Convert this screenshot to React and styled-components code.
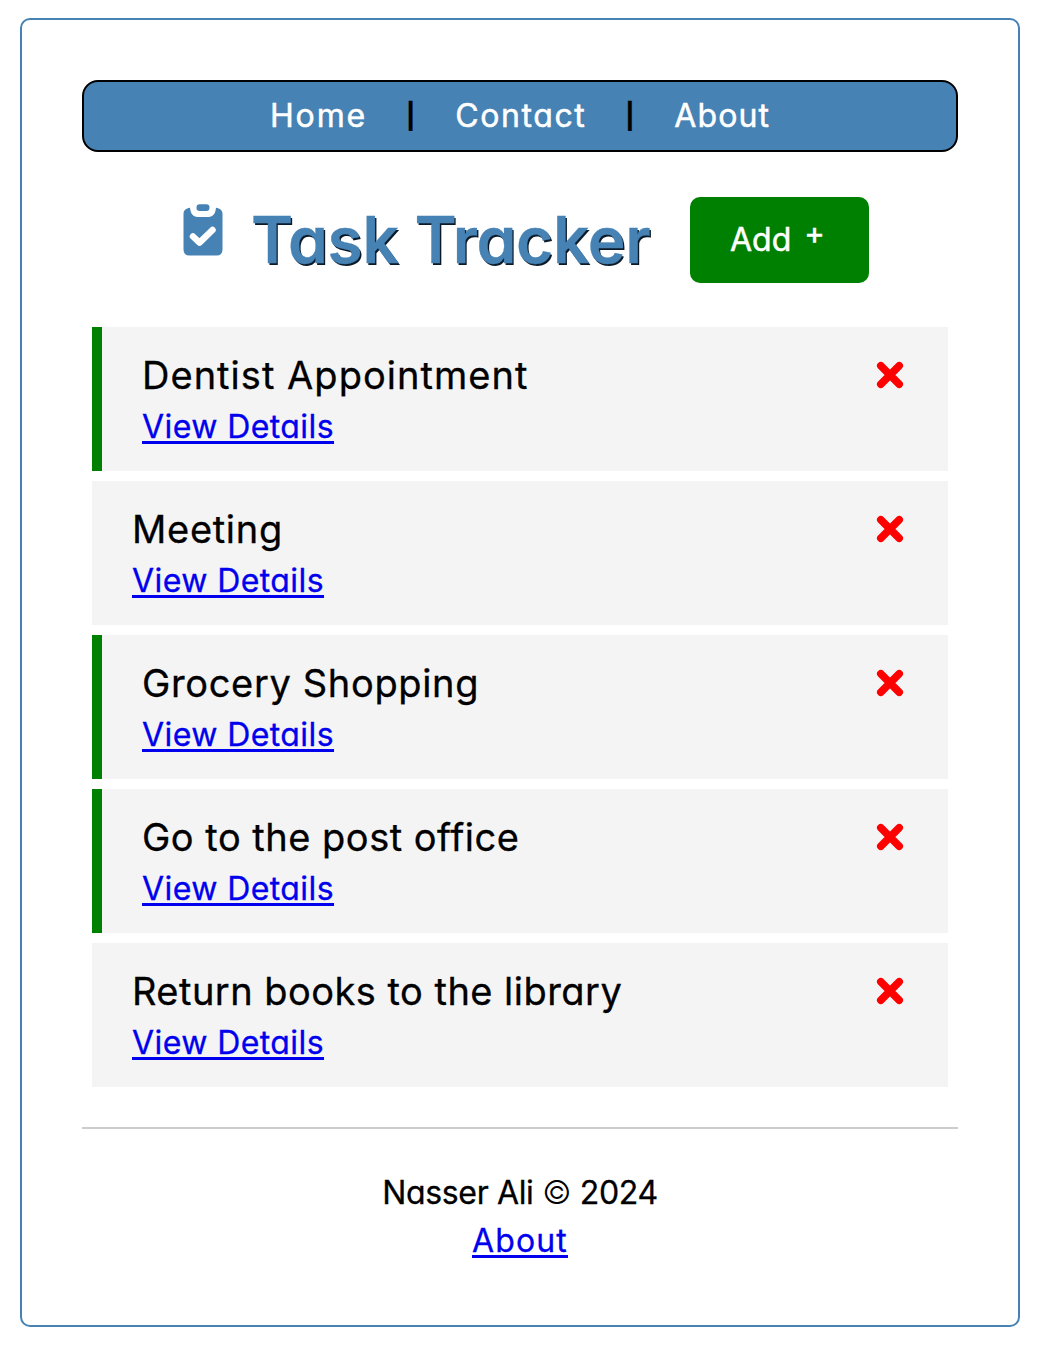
import React from "react";
import styled, { createGlobalStyle } from "styled-components";

const GlobalStyle = createGlobalStyle`
  * { box-sizing: border-box; }
  body {
    margin: 0;
    background: #fff;
    color: #000;
    font-family: Inter, "Open Sans", sans-serif;
    font-size: 32px;
    line-height: 48px;
    font-feature-settings: "cv11" 1;
    -webkit-text-stroke: 0.3px currentColor;
  }
`;

const Container = styled.div`
  height: 1309px;
  margin: 18px 20px 21px;
  padding: 60px;
  border: 2px solid steelblue;
  border-radius: 10px;
`;

const Nav = styled.nav`
  display: flex;
  align-items: center;
  justify-content: center;
  height: 72px;
  background: steelblue;
  border: 2px solid #000;
  border-radius: 16px;
`;

const NavLink = styled.a`
  color: #fff;
  text-decoration: none;
  letter-spacing: ${(p) => p.$spacing}px;
  -webkit-text-stroke-width: 0.5px;
`;

const Divider = styled.span`
  width: 88px;
  padding-right: 1px;
  text-align: center;
  font-size: 25px;
  font-weight: 700;
`;

const Header = styled.header`
  display: flex;
  align-items: center;
  height: 86px;
  margin-top: 45px;
  padding-left: 101px;
`;

const ClipboardSvg = styled.svg`
  width: 40px;
  height: 52px;
  margin-top: -20px;
`;

const Title = styled.h1`
  margin: 0 0 0 28px;
  width: 439px;
  color: steelblue;
  font-size: 64px;
  line-height: 86px;
  font-weight: 600;
  letter-spacing: -0.3px;
  white-space: nowrap;
  text-shadow: 1.5px 1.5px 0 #0b1a28;
`;

const AddButton = styled.button`
  display: flex;
  align-items: center;
  gap: 13px;
  width: 179px;
  height: 86px;
  padding: 0 0 0 40px;
  border: 0;
  border-radius: 10px;
  background: green;
  color: #fff;
  font: inherit;
  -webkit-text-stroke-width: 0.5px;
  cursor: pointer;
`;

const Plus = styled.span`
  margin-top: -14px;
  font-size: 31px;
`;

const TaskList = styled.main`
  display: flex;
  flex-direction: column;
  gap: 10px;
  margin: 44px 10px 0;
`;

const TaskCard = styled.article`
  display: flex;
  align-items: flex-start;
  justify-content: space-between;
  height: 144px;
  padding: 24px 45px 0 40px;
  background: #f4f4f4;
  border-left: ${(p) => (p.$reminder ? "10px solid green" : "0")};
`;

const TaskTitle = styled.h3`
  margin: 0 0 4px;
  font-size: 38px;
  line-height: 48px;
  font-weight: 400;
  letter-spacing: ${(p) => p.$spacing}px;
  white-space: nowrap;
`;

const TextLink = styled.a`
  display: block;
  width: max-content;
  color: #0000ee;
  letter-spacing: ${(p) => p.$spacing}px;
  text-decoration: underline;
  text-decoration-thickness: 3px;
  text-underline-offset: 3px;
`;

const CloseSvg = styled.svg`
  width: 28px;
  height: 28px;
  margin: 10px -1px 0 0;
  cursor: pointer;
`;

const Footer = styled.footer`
  display: flex;
  flex-direction: column;
  align-items: center;
  margin-top: 40px;
  padding-top: 40px;
  border-top: 2px solid #ccc;
`;

const Copyright = styled.p`
  margin: 0;
  letter-spacing: -0.35px;
`;

const Mark = styled.span`
  font-weight: 300;
  -webkit-text-stroke: 0;
`;

const tasks = [
  { text: "Dentist Appointment", reminder: true, spacing: 1.03 },
  { text: "Meeting", reminder: false, spacing: 0.7 },
  { text: "Grocery Shopping", reminder: true, spacing: 0.65 },
  { text: "Go to the post office", reminder: true, spacing: 0.5 },
  { text: "Return books to the library", reminder: false, spacing: 0.47 },
];

const ClipboardIcon = () => (
  <ClipboardSvg viewBox="0 0 40 52" fill="steelblue">
    <path d="M7 3.800C3 4.200.5 6.500.5 10V45.500Q.5 51.500 6.500 51.500H33.500Q39.500 51.500 39.500 45.500V10C39.500 6.500 37 4.200 33 3.800C32.500 9.500 30 13 25.500 13H14.500C10 13 7.500 9.500 7 3.800Z" />
    <rect x="13.500" y="0.300" width="13" height="6.700" rx="3.200" />
    <path d="M10 32.500L16.500 38.600L29.500 26" fill="none" stroke="#fff" strokeWidth="6.500" strokeLinecap="round" strokeLinejoin="round" />
  </ClipboardSvg>
);

const CloseIcon = () => (
  <CloseSvg viewBox="0 0 28 28" stroke="red" strokeWidth="7.600" strokeLinecap="round">
    <path d="M4.800 4.800L23.200 23.200M23.200 4.800L4.800 23.200" />
  </CloseSvg>
);

export default function App() {
  return (
    <>
      <GlobalStyle />
      <Container>
        <Nav>
          <NavLink href="#" $spacing={1.9}>Home</NavLink>
          <Divider>|</Divider>
          <NavLink href="#" $spacing={1.6}>Contact</NavLink>
          <Divider>|</Divider>
          <NavLink href="#" $spacing={1.1}>About</NavLink>
        </Nav>
        <Header>
          <ClipboardIcon />
          <Title>Task Tracker</Title>
          <AddButton>
            Add <Plus>+</Plus>
          </AddButton>
        </Header>
        <TaskList>
          {tasks.map((task) => (
            <TaskCard key={task.text} $reminder={task.reminder}>
              <div>
                <TaskTitle $spacing={task.spacing}>{task.text}</TaskTitle>
                <TextLink href="#" $spacing={0.42}>View Details</TextLink>
              </div>
              <CloseIcon />
            </TaskCard>
          ))}
        </TaskList>
        <Footer>
          <Copyright>
            Nasser Ali <Mark>©</Mark> 2024
          </Copyright>
          <TextLink href="#" $spacing={1.14}>About</TextLink>
        </Footer>
      </Container>
    </>
  );
}
